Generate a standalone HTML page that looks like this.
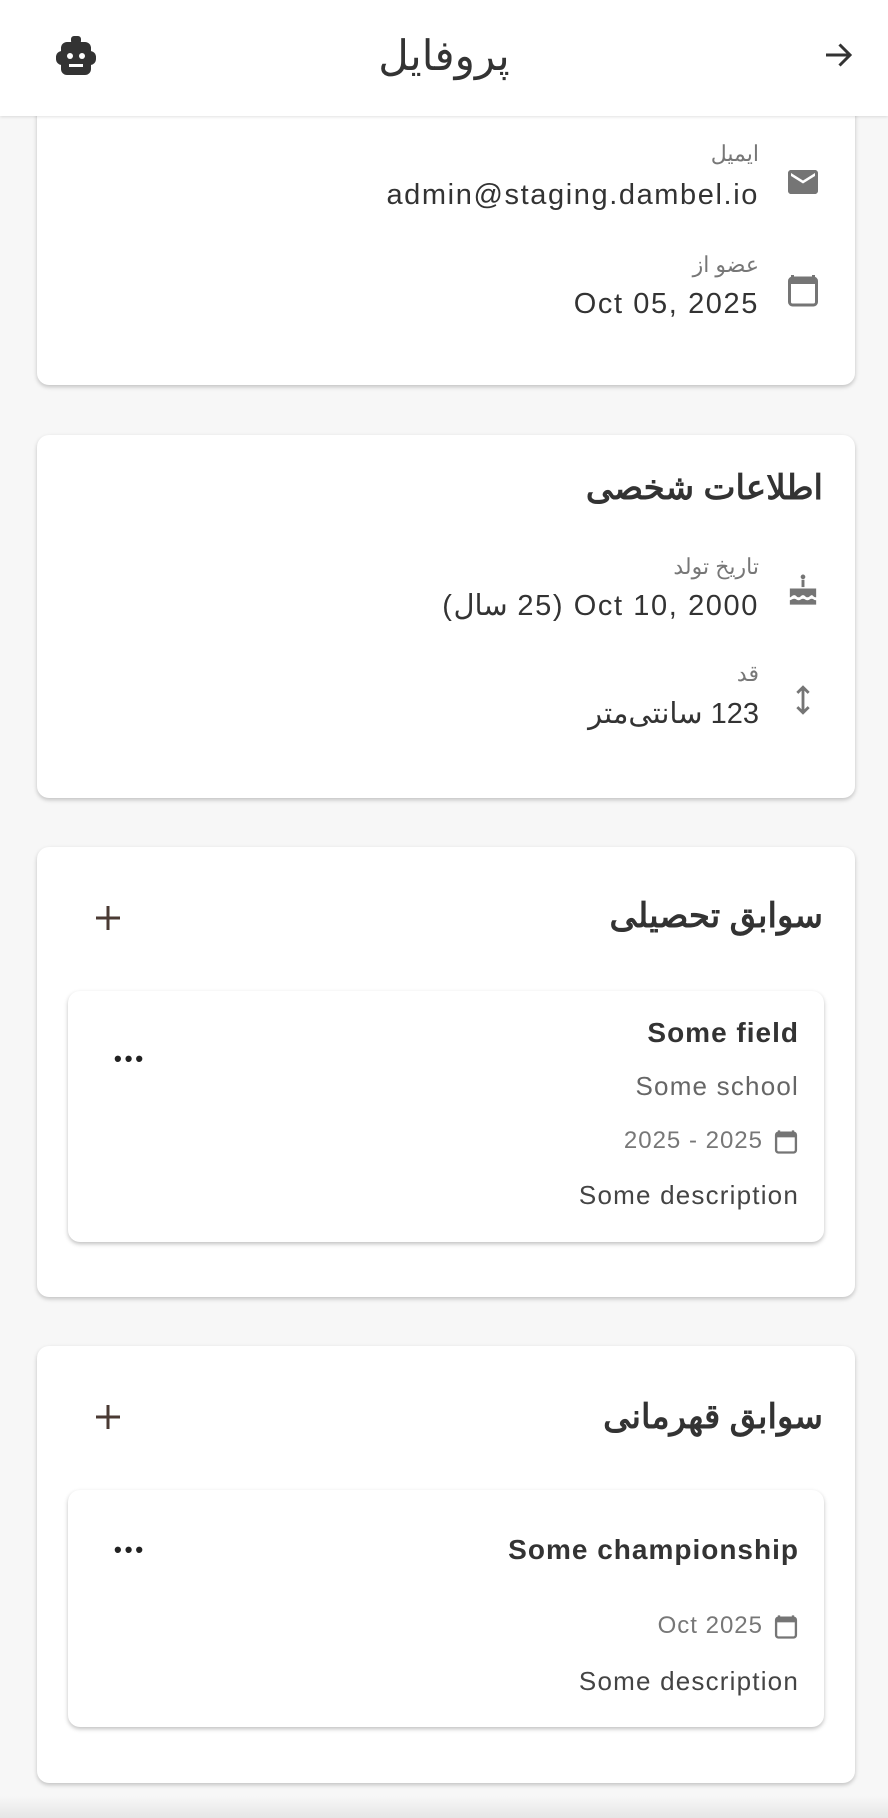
<!DOCTYPE html>
<html><head><meta charset="utf-8"><style>
*{margin:0;padding:0;box-sizing:border-box}
body{width:888px;height:1818px;background:#f7f7f7;position:relative;overflow:hidden;font-family:"Liberation Sans","Noto Sans CJK SC",sans-serif;color:#333}
.a{position:absolute;white-space:nowrap}
.t{position:absolute;right:129px;height:40px;line-height:40px;white-space:nowrap;text-align:right;direction:rtl}
.lab{font-size:22px;color:#777}
.val{font-size:29px;color:#333;letter-spacing:1.6px}
.card{position:absolute;left:37px;width:818px;background:#fff;border-radius:12px;box-shadow:0 2px 4px rgba(0,0,0,.22)}
.inner{position:absolute;left:68px;width:756px;background:#fff;border-radius:12px;box-shadow:0 2px 4px rgba(0,0,0,.25)}
.title{position:absolute;right:65px;font-size:34px;font-weight:bold;height:48px;line-height:48px;color:#333;direction:rtl}
.r{right:89px;height:36px;line-height:36px}
.dots{position:absolute;left:114px;font-size:22px;font-weight:bold;letter-spacing:3px;color:#222}
</style></head><body>
<div class="card" style="top:80px;height:305px"></div>
<div class="card" style="top:435px;height:363px"></div>
<div class="card" style="top:847px;height:450px"></div>
<div class="card" style="top:1346px;height:437px"></div>
<div class="inner" style="top:991px;height:251px"></div>
<div class="inner" style="top:1490px;height:237px"></div>

<div class="a" style="left:0;top:0;width:888px;height:116px;background:#fff;box-shadow:0 1px 3px rgba(0,0,0,.12)"></div>
<div class="a" style="left:0;width:888px;top:28px;height:56px;line-height:56px;text-align:center;font-size:42px;color:#333">پروفایل</div>
<svg class="a" style="left:52px;top:34px" width="48" height="44" viewBox="0 0 48 44"><rect x="19" y="2" width="10" height="8" rx="3" fill="#333"/><rect x="9" y="8" width="30" height="33" rx="6" fill="#333"/><rect x="4" y="17" width="40" height="14" rx="6" fill="#333"/><circle cx="18" cy="22" r="3" fill="#fff"/><circle cx="30" cy="22" r="3" fill="#fff"/><rect x="17" y="30" width="14" height="3" fill="#fff"/></svg>
<svg class="a" style="left:820px;top:37px" width="36" height="36" viewBox="0 0 24 24"><path d="M4 12h15M13 5l7 7-7 7" stroke="#333" stroke-width="2" fill="none"/></svg>

<div class="t lab" style="top:134px">ایمیل</div>
<div class="t val" style="top:175px">admin@staging.dambel.io</div>
<svg class="a" style="left:785px;top:164px" width="36" height="36" viewBox="0 0 24 24"><path d="M20 4H4c-1.1 0-2 .9-2 2v12c0 1.1.9 2 2 2h16c1.1 0 2-.9 2-2V6c0-1.1-.9-2-2-2zm0 4l-8 5-8-5V6l8 5 8-5v2z" fill="#757575"/></svg>
<div class="t lab" style="top:245px">عضو از</div>
<div class="t val" style="top:284px">Oct 05, 2025</div>
<svg class="a" style="left:785px;top:270px" width="36" height="40" viewBox="0 0 24 26"><path d="M5 3v3M19 3v3" stroke="#757575" stroke-width="2"/><rect x="3" y="5" width="18" height="18" rx="2" fill="none" stroke="#757575" stroke-width="2"/><rect x="3" y="5" width="18" height="4" fill="#757575"/></svg>

<div class="title" style="top:464px">اطلاعات شخصی</div>
<div class="t lab" style="top:547px">تاریخ تولد</div>
<div class="t val" style="top:586px">Oct 10, 2000 (25 سال)</div>
<svg class="a" style="left:785px;top:571px" width="36" height="38" viewBox="0 0 24 26"><circle cx="12" cy="4" r="1.6" fill="#757575"/><rect x="11" y="6" width="2" height="5" fill="#757575"/><path d="M3 12h18v6c-2 0-2-1.5-3-1.5s-1.5 1.5-3 1.5-1.5-1.5-3-1.5-1.5 1.5-3 1.5-1.5-1.5-3-1.5S4 18 3 18z" fill="#757575"/><path d="M3 20c1 0 1.5-1 3-1s1.5 1 3 1 1.5-1 3-1 1.5 1 3 1 1.5-1 3-1 1 1 3 1v3H3z" fill="#757575"/></svg>
<div class="t lab" style="top:654px">قد</div>
<div class="t val" style="top:694px">123 سانتی‌متر</div>
<svg class="a" style="left:786px;top:682px" width="34" height="36" viewBox="0 0 24 24"><path d="M12 4v16M8 7l4-4 4 4M8 17l4 4 4-4" stroke="#757575" stroke-width="2" fill="none"/></svg>

<div class="title" style="top:892px">سوابق تحصیلی</div>
<svg class="a" style="left:90px;top:900px" width="36" height="36" viewBox="0 0 24 24"><path d="M12 4v16M4 12h16" stroke="#4a3a33" stroke-width="2"/></svg>
<div class="t r" style="top:1015px;font-size:28px;font-weight:bold;color:#333;letter-spacing:1px">Some field</div>
<div class="dots" style="top:1046px">•••</div>
<div class="t r" style="top:1068px;font-size:26px;color:#666;letter-spacing:1.2px">Some school</div>
<div class="t r" style="top:1123px;font-size:24px;color:#777;right:125px;letter-spacing:1px">2025 - 2025</div>
<svg class="a" style="left:772px;top:1128px" width="28" height="28" viewBox="0 0 24 24"><path d="M6 2v3M18 2v3" stroke="#757575" stroke-width="2"/><rect x="3.5" y="4" width="17" height="17" rx="2" fill="none" stroke="#757575" stroke-width="2"/><rect x="3.5" y="4" width="17" height="4" fill="#757575"/></svg>
<div class="t r" style="top:1177px;font-size:26px;color:#444;letter-spacing:1.2px">Some description</div>

<div class="title" style="top:1393px">سوابق قهرمانی</div>
<svg class="a" style="left:90px;top:1399px" width="36" height="36" viewBox="0 0 24 24"><path d="M12 4v16M4 12h16" stroke="#4a3a33" stroke-width="2"/></svg>
<div class="t r" style="top:1532px;font-size:28px;font-weight:bold;color:#333;letter-spacing:1px">Some championship</div>
<div class="dots" style="top:1537px">•••</div>
<div class="t r" style="top:1608px;font-size:24px;color:#777;right:125px;letter-spacing:1px">Oct 2025</div>
<svg class="a" style="left:772px;top:1613px" width="28" height="28" viewBox="0 0 24 24"><path d="M6 2v3M18 2v3" stroke="#757575" stroke-width="2"/><rect x="3.5" y="4" width="17" height="17" rx="2" fill="none" stroke="#757575" stroke-width="2"/><rect x="3.5" y="4" width="17" height="4" fill="#757575"/></svg>
<div class="t r" style="top:1663px;font-size:26px;color:#444;letter-spacing:1.2px">Some description</div>
<div class="a" style="left:0;top:1796px;width:888px;height:22px;background:linear-gradient(to bottom,rgba(230,230,230,0),#e6e6e6)"></div>
</body></html>
